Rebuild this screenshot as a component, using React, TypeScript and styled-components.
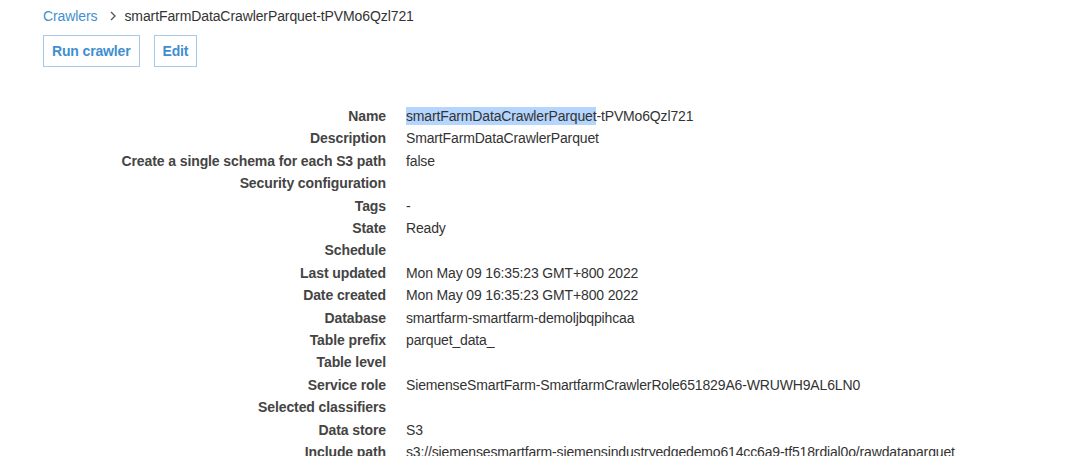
import React from "react";
import styled, { createGlobalStyle } from "styled-components";

const Global = createGlobalStyle`
  html, body { margin: 0; padding: 0; background: #ffffff; }
  body { font-family: "Liberation Sans", Arial, Helvetica, sans-serif; color: #333333; }
`;

const Page = styled.div`
  padding: 7px 0 0 43px;
  width: 1080px;
  height: 456px;
  box-sizing: border-box;
  overflow: hidden;
`;

const Breadcrumb = styled.nav`
  display: flex;
  align-items: center;
  font-size: 14px;
  line-height: 18px;
  color: #333333;
  letter-spacing: -0.1px;
`;

const Crumb = styled.a`
  color: #3f8fd0;
  text-decoration: none;
`;

const Chevron = styled.svg`
  margin: 0 8px 0 13px;
  flex: none;
`;

const Toolbar = styled.div`
  display: flex;
  gap: 14px;
  margin-top: 10px;
`;

const Button = styled.button<{ $px?: number }>`
  font-family: "Liberation Sans", Arial, Helvetica, sans-serif;
  font-size: 14px;
  font-weight: 700;
  letter-spacing: -0.15px;
  color: #3f8fd0;
  background: #ffffff;
  border: 1px solid #a9c9e6;
  height: 32px;
  padding: 0 ${(p) => p.$px ?? 9}px;
  border-radius: 0;
`;

const Details = styled.dl`
  display: grid;
  grid-template-columns: 343px 1fr;
  column-gap: 20px;
  margin: 38px 0 0 0;
  font-size: 14px;
  line-height: 22.4px;
  letter-spacing: -0.15px;
`;

const Label = styled.dt`
  text-align: right;
  font-weight: 700;
  color: #444444;
  margin: 0;
  white-space: nowrap;
  letter-spacing: -0.1px;
`;

const Value = styled.dd`
  margin: 0;
  color: #333333;
  white-space: nowrap;
  min-height: 22.4px;
`;

const Selected = styled.span`
  background: #b4d5fd;
  padding: 1px 0;
`;

const rows: [string, React.ReactNode][] = [
  ["Name", <><Selected>smartFarmDataCrawlerParquet</Selected>-tPVMo6Qzl721</>],
  ["Description", "SmartFarmDataCrawlerParquet"],
  ["Create a single schema for each S3 path", "false"],
  ["Security configuration", ""],
  ["Tags", "-"],
  ["State", "Ready"],
  ["Schedule", ""],
  ["Last updated", "Mon May 09 16:35:23 GMT+800 2022"],
  ["Date created", "Mon May 09 16:35:23 GMT+800 2022"],
  ["Database", "smartfarm-smartfarm-demoljbqpihcaa"],
  ["Table prefix", "parquet_data_"],
  ["Table level", ""],
  ["Service role", "SiemenseSmartFarm-SmartfarmCrawlerRole651829A6-WRUWH9AL6LN0"],
  ["Selected classifiers", ""],
  ["Data store", "S3"],
  ["Include path", "s3://siemensesmartfarm-siemensindustryedgedemo614cc6a9-tf518rdial0o/rawdataparquet"],
];

export default function App() {
  return (
    <>
      <Global />
      <Page>
        <Breadcrumb>
          <Crumb href="#">Crawlers</Crumb>
          <Chevron width="6" height="10" viewBox="0 0 6 10" aria-hidden="true">
            <path d="M1 1l4 4-4 4" fill="none" stroke="#555" strokeWidth="1.3" />
          </Chevron>
          <span>smartFarmDataCrawlerParquet-tPVMo6Qzl721</span>
        </Breadcrumb>
        <Toolbar>
          <Button $px={8}>Run crawler</Button>
          <Button $px={8}>Edit</Button>
        </Toolbar>
        <Details>
          {rows.map(([k, v]) => (
            <React.Fragment key={k}>
              <Label>{k}</Label>
              <Value>{v}</Value>
            </React.Fragment>
          ))}
        </Details>
      </Page>
    </>
  );
}
